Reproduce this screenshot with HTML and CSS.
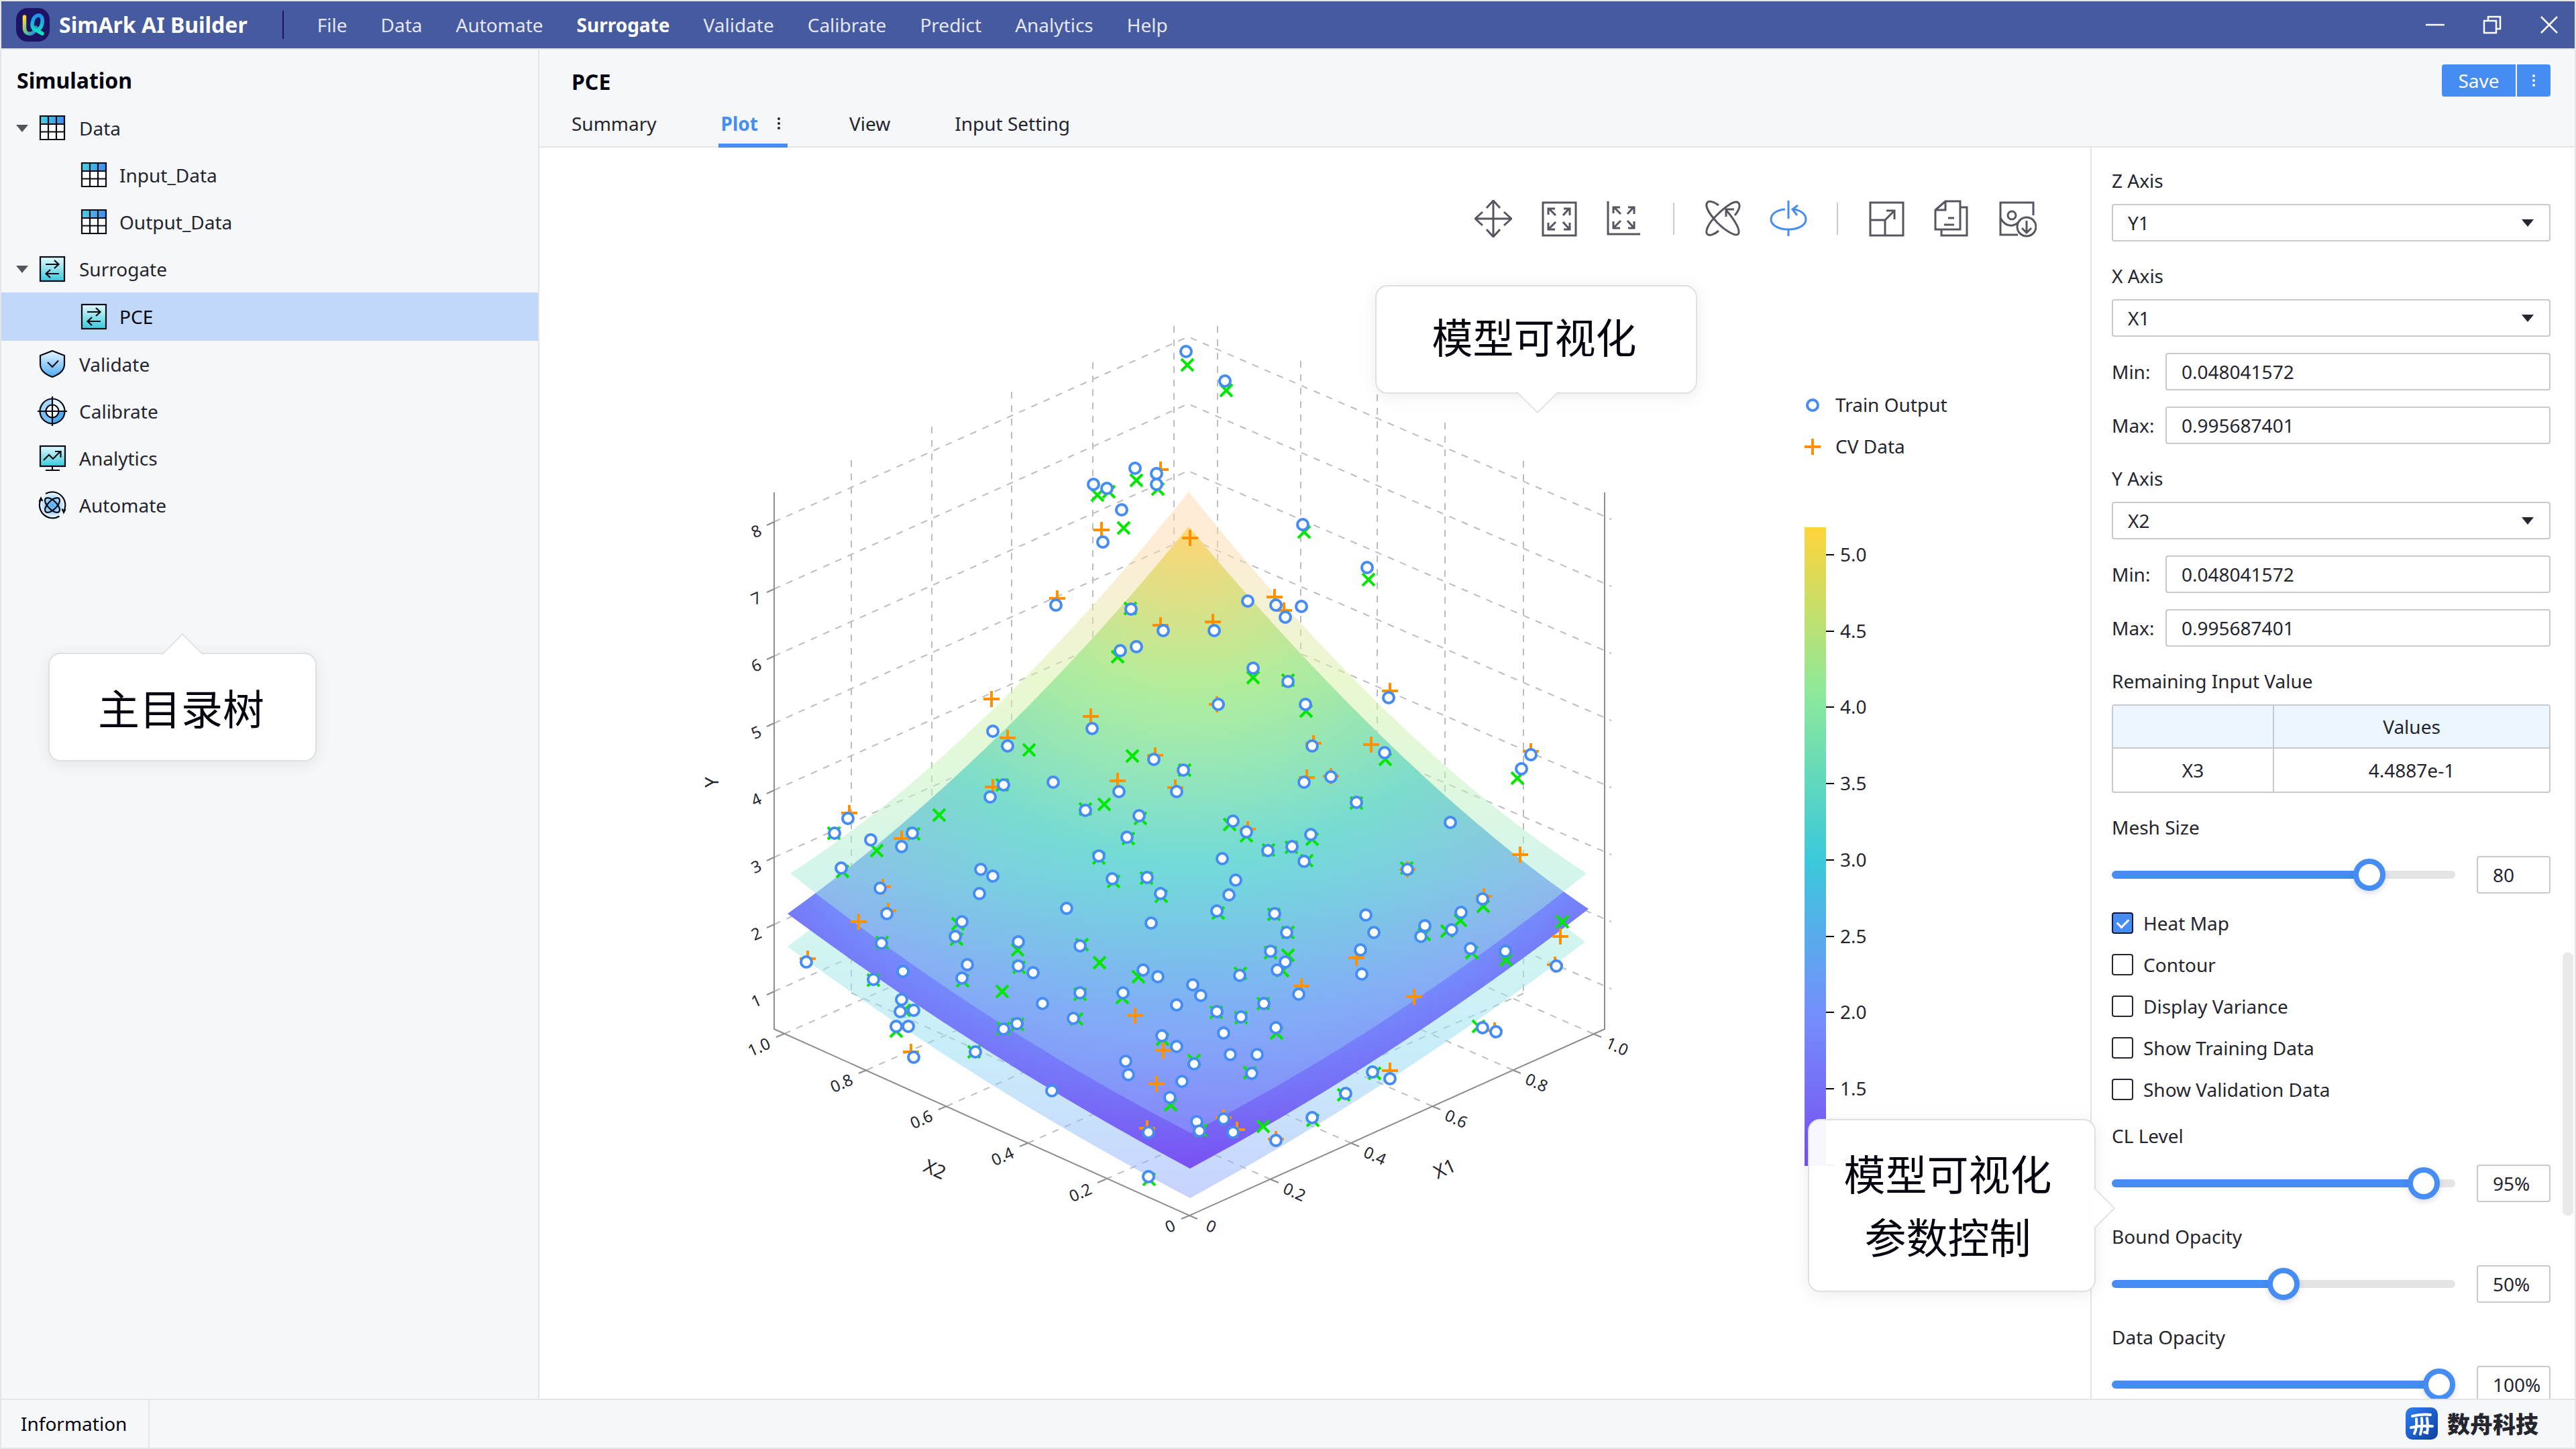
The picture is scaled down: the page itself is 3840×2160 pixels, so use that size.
FILE: index.html
```html
<!DOCTYPE html>
<html lang="en">
<head>
<meta charset="utf-8">
<title>SimArk AI Builder</title>
<link rel="stylesheet" href="styles.css">
</head>
<body>
<svg class="defs" aria-hidden="true">
  <defs>
    <linearGradient id="gHead" x1="0" x2="1"><stop offset="0" stop-color="#4ad0df"/><stop offset="1" stop-color="#3f8cf3"/></linearGradient>
    <linearGradient id="gTeal" x1="0" y1="0" x2="0" y2="1"><stop offset="0" stop-color="#e3fafc"/><stop offset="1" stop-color="#3bc9db"/></linearGradient>
    <linearGradient id="gSky" x1="0" y1="0" x2="0" y2="1"><stop offset="0" stop-color="#e7f5ff"/><stop offset="1" stop-color="#4dabf7"/></linearGradient>
    <radialGradient id="gGlow"><stop offset="0" stop-color="#4dabf7"/><stop offset=".35" stop-color="#7cc2fa"/><stop offset="1" stop-color="#eaf5fd"/></radialGradient>
    <symbol id="i-table" viewBox="0 0 40 40">
      <rect x="2" y="2" width="36" height="35" fill="#fff"/><rect x="2" y="2" width="36" height="12" fill="url(#gHead)"/>
      <path d="M2 2h36v35H2zM2 14h36M2 25.500h36M14 2v35M26 2v35" fill="none" stroke="#0a0a14" stroke-width="2.200"/>
    </symbol>
    <symbol id="i-swap" viewBox="0 0 40 40">
      <rect x="2" y="2" width="36" height="36" fill="url(#gTeal)" stroke="#0a0a14" stroke-width="2.200"/>
      <path d="M10 13h19M23 7l6.500 6-6.500 6M30 27H11M17 21l-6.500 6 6.500 6" fill="none" stroke="#0a0a14" stroke-width="2.200"/>
    </symbol>
    <symbol id="i-shield" viewBox="0 0 44 44">
      <path d="M22 2 40 9v13c0 9-7 15-18 19C11 37 4 31 4 22V9z" fill="url(#gSky)" stroke="#0a0a14" stroke-width="2.200"/>
      <path d="M15 19l7 7 9-9.500" fill="none" stroke="#0a0a14" stroke-width="2.200"/>
    </symbol>
    <symbol id="i-target" viewBox="0 0 44 44">
      <circle cx="22" cy="22" r="18.500" fill="#a5d5fb"/><path d="M22 22V3.500A18.500 18.500 0 0 1 40.500 22z" fill="#e7f5ff"/><path d="M22 22h18.500A18.500 18.500 0 0 1 22 40.500z" fill="#4dabf7"/><path d="M22 22v18.500A18.500 18.500 0 0 1 3.500 22z" fill="#74bef9"/>
      <circle cx="22" cy="22" r="9.500" fill="#fffef8"/>
      <g fill="none" stroke="#0a0a14" stroke-width="2.200"><circle cx="22" cy="22" r="18.500"/><circle cx="22" cy="22" r="9.500"/><path d="M22 0v44M0 22h44"/></g>
    </symbol>
    <symbol id="i-chart" viewBox="0 0 44 44">
      <rect x="4" y="4" width="37" height="30" fill="url(#gTeal)" stroke="#0a0a14" stroke-width="2.200"/>
      <path d="M9 25l8-8 6 6 11-11M26 12h8.500v9M22 34v5M12 40h21" fill="none" stroke="#0a0a14" stroke-width="2.200"/>
    </symbol>
    <symbol id="i-atom" viewBox="0 0 44 44">
      <circle cx="22" cy="22" r="18" fill="url(#gGlow)"/>
      <g fill="none" stroke="#0a0a14" stroke-width="2.200">
        <ellipse cx="22" cy="22" rx="14" ry="6.500" transform="rotate(45 22 22)"/><ellipse cx="22" cy="22" rx="14" ry="6.500" transform="rotate(-45 22 22)"/>
        <path d="M12 5a19.500 19.500 0 0 1 27.500 25M32.500 38.500A19.500 19.500 0 0 1 5 13M2.500 17 5 11.500l2.500 4.500M36.500 27.500l2.500 5.500 2.500-5"/>
      </g>
    </symbol>
  </defs>
</svg>
<div class="window">
  <header class="titlebar">
    <div class="app">
      <svg class="app-logo" viewBox="0 0 50 50" aria-hidden="true">
        <defs>
          <linearGradient id="gU" x1="0" y1="0" x2="1" y2="1"><stop offset="0" stop-color="#ffd93b"/><stop offset=".5" stop-color="#5fc48d"/><stop offset="1" stop-color="#1e7fe0"/></linearGradient>
          <linearGradient id="gQ" x1="0" y1="0" x2="0" y2="1"><stop offset="0" stop-color="#1e90ee"/><stop offset=".6" stop-color="#12c8d8"/><stop offset="1" stop-color="#12e4b8"/></linearGradient>
        </defs>
        <rect width="50" height="50" rx="17" fill="#1d1464"/>
        <path d="M12.500 13v16c0 8 5 10 10 9 4-1 7-5 7-9" fill="none" stroke="url(#gU)" stroke-width="5.500" stroke-linecap="round"/>
        <path d="M31 33c-7 0-8-8-6-14 2-8 12-12 14-3 1 8-2 15-8 17M32 34l7 4" fill="none" stroke="url(#gQ)" stroke-width="5.500" stroke-linecap="round"/>
      </svg>
      <strong class="app-name">SimArk AI Builder</strong>
    </div>
    <nav class="menu" aria-label="Main menu">
      <a href="#">File</a><a href="#">Data</a><a href="#">Automate</a><a href="#" class="current">Surrogate</a><a href="#">Validate</a><a href="#">Calibrate</a><a href="#">Predict</a><a href="#">Analytics</a><a href="#">Help</a>
    </nav>
    <div class="window-controls">
      <button type="button" aria-label="Minimize"><svg viewBox="0 0 28 28"><path d="M0 14h28"/></svg></button>
      <button type="button" aria-label="Restore"><svg viewBox="0 0 28 28"><path d="M2 8h18v18H2zM8 8V2h18v18h-6"/></svg></button>
      <button type="button" aria-label="Close"><svg viewBox="0 0 28 28"><path d="M2 2l24 24M26 2 2 26"/></svg></button>
    </div>
  </header>

  <div class="workspace">
    <aside class="sidebar">
      <h2>Simulation</h2>
      <ul class="tree">
        <li><a href="#" class="row"><span class="caret"></span><svg><use href="#i-table"/></svg>Data</a></li>
        <li><a href="#" class="row child"><svg><use href="#i-table"/></svg>Input_Data</a></li>
        <li><a href="#" class="row child"><svg><use href="#i-table"/></svg>Output_Data</a></li>
        <li><a href="#" class="row"><span class="caret"></span><svg><use href="#i-swap"/></svg>Surrogate</a></li>
        <li><a href="#" class="row child selected"><svg><use href="#i-swap"/></svg>PCE</a></li>
        <li><a href="#" class="row leaf"><svg><use href="#i-shield"/></svg>Validate</a></li>
        <li><a href="#" class="row leaf"><svg><use href="#i-target"/></svg>Calibrate</a></li>
        <li><a href="#" class="row leaf"><svg><use href="#i-chart"/></svg>Analytics</a></li>
        <li><a href="#" class="row leaf"><svg><use href="#i-atom"/></svg>Automate</a></li>
      </ul>
      <div class="callout callout-tree">主目录树</div>
    </aside>

    <main class="main">
      <header class="doc-head">
        <div>
          <h1>PCE</h1>
          <nav class="tabs" aria-label="Views">
            <a href="#">Summary</a>
            <a href="#" class="active">Plot<svg class="dots" viewBox="0 0 6 20"><circle cx="3" cy="3" r="2"/><circle cx="3" cy="10" r="2"/><circle cx="3" cy="17" r="2"/></svg></a>
            <a href="#">View</a>
            <a href="#">Input Setting</a>
          </nav>
        </div>
        <div class="save">
          <button type="button">Save</button>
          <button type="button" class="more" aria-label="More save options"><svg class="dots" viewBox="0 0 6 20"><circle cx="3" cy="3" r="2"/><circle cx="3" cy="10" r="2"/><circle cx="3" cy="17" r="2"/></svg></button>
        </div>
      </header>

      <div class="content">
        <section class="plot">
          <div class="toolbar">
            <div class="group">
              <button type="button" aria-label="Pan"><svg viewBox="0 0 56 56"><path d="M28 2v52M2 28h52M18 12 28 1l10 11M18 44l10 11 10-11M12 18 1 28l11 10M44 18l11 10-11 10"/></svg></button>
              <button type="button" aria-label="Fit"><svg viewBox="0 0 56 56"><path d="M4 4h49v49H4zM13 13l10 10M12 22V13h10M43 13 34 23M35 13h9v10M13 43l10-10M12 34v10h10M43 43l-9-10M44 34v10H35"/></svg></button>
              <button type="button" aria-label="Fit to axes"><svg viewBox="0 0 56 56"><path d="M3 2v49h48M12 11l10 10M11 20V11h10M41 11l-9 10M33 11h9v10M12 41l10-10M11 32v10h10M41 41l-9-10M42 32v10H33"/></svg></button>
            </div>
            <span class="sep"></span>
            <div class="group">
              <button type="button" aria-label="Orbit"><svg viewBox="0 0 56 56"><path d="M46 23c7-8 9-16 5-19-5-4-19 6-31 18C7 34 1 47 5 51c3 3 10 1 17-5M22 8C14 2 7 1 5 4c-4 5 3 17 15 30 12 12 27 21 31 17 4-5-4-20-18-36M33 25V14h12"/></svg></button>
              <button type="button" class="on" aria-label="Rotate around axis"><svg viewBox="0 0 56 56"><path d="M28 1v27M28 44v10M23 14C10 15 2 21 2 29c0 9 12 15 26 15s26-6 26-15c0-8-8-14-19-15M42 8l-8 6 7 9"/></svg></button>
            </div>
            <span class="sep"></span>
            <div class="group">
              <button type="button" aria-label="Resize"><svg viewBox="0 0 56 56"><path d="M4 4h49v49H4zM4 30h22v23M26 30l14-14M28 16h12v13"/></svg></button>
              <button type="button" aria-label="Copy"><svg viewBox="0 0 56 56"><path d="M18 2h22v42H3V15zM18 2v13H3M40 11h10v42H12v-9M22 27h9M16 37h15"/></svg></button>
              <button type="button" aria-label="Save image"><svg viewBox="0 0 56 56"><path d="M28 52H2V4h49v19M2 27c5 9 11 12 18 11 4-1 6-2 8-4"/><circle cx="19" cy="23" r="6"/><circle cx="41" cy="40" r="14"/><path d="M41 31v17M34 42l7 7 7-7"/></svg></button>
            </div>
          </div>
          <svg class="chart" viewBox="804 380 2312 1705" preserveAspectRatio="xMidYMin meet" role="img" aria-label="PCE response surface">
            <defs>
              <radialGradient id="gSurface" gradientUnits="userSpaceOnUse" cx="1772" cy="785" r="960">
                <stop offset="0" stop-color="#ffd43b"/><stop offset=".27" stop-color="#8ce99a"/><stop offset=".52" stop-color="#3bc9db"/><stop offset=".79" stop-color="#748ffc"/><stop offset="1" stop-color="#7950f2"/>
              </radialGradient>
              <linearGradient id="gUpper" gradientUnits="userSpaceOnUse" x1="0" y1="733" x2="0" y2="1689">
                <stop offset="0" stop-color="#ffd7ad"/><stop offset=".08" stop-color="#fdd9ac"/><stop offset=".3" stop-color="#d3f1a0"/><stop offset=".44" stop-color="#c1f1b9"/><stop offset=".6" stop-color="#a7ebd9"/><stop offset=".8" stop-color="#93c8f2"/><stop offset="1" stop-color="#92acfe"/>
              </linearGradient>
              <linearGradient id="gLower" gradientUnits="userSpaceOnUse" x1="0" y1="1386" x2="0" y2="1786">
                <stop offset="0" stop-color="#a6ece0"/><stop offset=".45" stop-color="#92dbf3"/><stop offset="1" stop-color="#91a5ff"/>
              </linearGradient>
              <linearGradient id="gBar" x1="0" y1="0" x2="0" y2="1">
                <stop offset="0" stop-color="#ffd43b"/><stop offset=".26" stop-color="#8ce99a"/><stop offset=".52" stop-color="#3bc9db"/><stop offset=".76" stop-color="#748ffc"/><stop offset="1" stop-color="#7950f2"/>
              </linearGradient>
              <g id="m-train"><circle r="8" fill="#fff" stroke="#458cf3" stroke-width="4"/></g>
              <path id="m-cv" d="M-12 0h24M0-12v24" stroke="#ff9100" stroke-width="4"/>
              <path id="m-val" d="M-9-9 9 9M9-9-9 9" stroke="#00e800" stroke-width="4"/>
            </defs>
            <g id="grid" class="grid"></g>
            <path d="M1174 1411 1772 960 2363 1404Q2076 1622 1774 1786 1458 1620 1174 1411Z" fill="url(#gLower)" opacity=".5"/>
            <path d="M1772 785Q1480 1143 1174 1362 1462 1575 1774 1742 2083 1576 2368 1355 2093 1168 1772 785Z" fill="url(#gSurface)"/>
            <path d="M1772 733Q1464 1118 1178 1302 1463 1528 1775 1689 2083 1530 2365 1302 2080 1118 1772 733Z" fill="url(#gUpper)" opacity=".5"/>
            <path class="axis" d="M1154 734V1534L1773 1812 2392 1534V734"/>
            <g id="axis" class="axis"></g>
            <g id="labels" class="labels"></g>
            <g class="titles">
              <text transform="translate(1060 1166) rotate(-90)">Y</text>
              <text transform="translate(1394 1742) rotate(24)">X2</text>
              <text transform="translate(2153 1741) rotate(-24)">X1</text>
            </g>
            <g id="points"></g>
            <g class="legend">
              <use href="#m-train" x="2702" y="604"/><text x="2736" y="614">Train Output</text>
              <use href="#m-cv" x="2702" y="666"/><text x="2736" y="676">CV Data</text>
            </g>
            <rect x="2690" y="786" width="32" height="952" fill="url(#gBar)"/>
            <g id="scale" class="scale"></g>
          </svg>
          <div class="callout callout-plot">模型可视化</div>
        </section>

        <form class="panel">
          <div class="field">
            <label for="z">Z Axis</label>
            <span class="select"><select id="z"><option>Y1</option></select></span>
          </div>
          <div class="field">
            <label for="x">X Axis</label>
            <span class="select"><select id="x"><option>X1</option></select></span>
            <div class="pair"><label for="xmin">Min:</label><input id="xmin" type="text" value="0.048041572"></div>
            <div class="pair"><label for="xmax">Max:</label><input id="xmax" type="text" value="0.995687401"></div>
          </div>
          <div class="field">
            <label for="y">Y Axis</label>
            <span class="select"><select id="y"><option>X2</option></select></span>
            <div class="pair"><label for="ymin">Min:</label><input id="ymin" type="text" value="0.048041572"></div>
            <div class="pair"><label for="ymax">Max:</label><input id="ymax" type="text" value="0.995687401"></div>
          </div>
          <div class="field">
            <span class="caption" id="remaining">Remaining Input Value</span>
            <table aria-labelledby="remaining">
              <thead><tr><th></th><th>Values</th></tr></thead>
              <tbody><tr><td>X3</td><td>4.4887e-1</td></tr></tbody>
            </table>
          </div>
          <div class="field">
            <label for="mesh">Mesh Size</label>
            <div class="slider"><input id="mesh" type="range" min="0" max="103" value="80" style="--fill:76%"><input type="text" value="80" aria-label="Mesh Size value"></div>
          </div>
          <div class="checks">
            <label><input type="checkbox" checked>Heat Map</label>
            <label><input type="checkbox">Contour</label>
            <label><input type="checkbox">Display Variance</label>
            <label><input type="checkbox">Show Training Data</label>
            <label><input type="checkbox">Show Validation Data</label>
          </div>
          <div class="field">
            <label for="cl">CL Level</label>
            <div class="slider"><input id="cl" type="range" value="95" style="--fill:95%"><input type="text" value="95%" aria-label="CL Level value"></div>
          </div>
          <div class="field">
            <label for="bo">Bound Opacity</label>
            <div class="slider"><input id="bo" type="range" value="50" style="--fill:50%"><input type="text" value="50%" aria-label="Bound Opacity value"></div>
          </div>
          <div class="field">
            <label for="do">Data Opacity</label>
            <div class="slider"><input id="do" type="range" value="100" style="--fill:100%"><input type="text" value="100%" aria-label="Data Opacity value"></div>
          </div>
          <span class="scroll-thumb"></span>
        </form>
        <div class="callout callout-panel">模型可视化<br>参数控制</div>
      </div>
    </main>
  </div>

  <footer class="statusbar">
    <span class="info">Information</span>
    <span class="brand">
      <svg viewBox="0 0 48 48" aria-hidden="true">
        <defs><linearGradient id="gBrand" x1="0" y1="0" x2="1" y2="1"><stop offset="0" stop-color="#2b80f5"/><stop offset="1" stop-color="#0f3f9c"/></linearGradient></defs>
        <rect width="48" height="48" rx="10" fill="url(#gBrand)"/>
        <path d="M10 13c9-2 19-3 27-2M8 30c10-2 22-3 32-2M16 17c1 9 0 16-3 22M24 16c1 9 0 17-2 24M32 16c1 8 1 17 0 22l-4-1" fill="none" stroke="#fff" stroke-width="4" stroke-linecap="round"/>
      </svg>
      <span>数舟科技</span>
    </span>
  </footer>
</div>
<script src="plot.js"></script>
</body>
</html>
```

FILE: styles.css
```css
* { box-sizing: border-box; }

body {
  margin: 0;
  font: 28px/40px "Noto Sans", "Noto Sans CJK SC", sans-serif;
  color: #24252f;
  background: #fff;
}

a { color: inherit; text-decoration: none; }
h1, h2 { margin: 0; font-size: 32px; line-height: 40px; font-weight: 700; color: #05050f; }
button, input, select { font: inherit; color: inherit; margin: 0; }
button { border: 0; padding: 0; background: none; cursor: pointer; }
svg { display: block; }
.defs { position: absolute; width: 0; height: 0; }

.window {
  display: flex;
  flex-direction: column;
  height: 100vh;
  border: 2px solid #e4e5e7;
  overflow: hidden;
}

/* Title bar */
.titlebar {
  display: flex;
  align-items: center;
  flex: none;
  height: 72px;
  padding: 0 24px 0 22px;
  border-bottom: 2px solid #e4e5e7;
  background: #465a9f;
  color: #fff;
}
.app { display: flex; align-items: center; gap: 14px; padding-right: 52px; border-right: 2px solid #1d1464; }
.app-logo { width: 50px; height: 50px; margin: -4px 0; }
.app-name { font-size: 32px; }
.menu { display: flex; gap: 50px; padding-left: 50px; color: #e3e6f1; }
.menu .current { color: #fff; font-weight: 700; }
.window-controls { display: flex; gap: 57px; margin-left: auto; }
.window-controls svg { width: 28px; height: 28px; fill: none; stroke: #fff; stroke-width: 2.5; }

/* Navigation tree */
.workspace { display: flex; flex: 1; min-height: 0; }
.sidebar {
  position: relative;
  flex: none;
  width: 802px;
  padding-top: 26px;
  border-right: 2px solid #e4e5e7;
  background: #f5f7f9;
}
.sidebar h2 { padding-left: 23px; }
.tree { list-style: none; margin: 16px 0 0; padding: 0; }
.row { display: flex; align-items: center; height: 70px; padding-left: 22px; }
.row svg { width: 40px; height: 40px; margin-right: 20px; }
.row.child { padding-left: 118px; }
.row.child svg { margin-right: 18px; }
.row.leaf { padding-left: 54px; }
.row.leaf svg { width: 44px; height: 44px; margin-right: 18px; }
.row.selected { height: 72px; background: #c1d8f8; color: #05050f; }
.caret { border: 9px solid transparent; border-top: 11px solid #53545d; border-bottom: 0; margin-right: 16px; }

/* Document header */
.main { display: flex; flex-direction: column; flex: 1; min-width: 0; }
.doc-head {
  display: flex;
  justify-content: space-between;
  align-items: flex-start;
  flex: none;
  padding: 28px 36px 0 44px;
  border-bottom: 2px solid #e4e5e7;
  background: #f5f7f9;
}
.doc-head h1 { padding-left: 4px; }
.tabs { display: flex; gap: 88px; margin: 16px 0 -2px; }
.tabs a { display: flex; align-items: center; gap: 28px; height: 62px; padding: 0 4px 4px; border-bottom: 6px solid transparent; }
.tabs .active { color: #458cf3; font-weight: 700; border-color: #458cf3; padding-right: 10px; }
.dots { width: 6px; height: 20px; fill: #24252f; }
.save { display: flex; gap: 2px; margin-top: -6px; }
.save button { height: 48px; width: 110px; background: #458cf3; color: #fff; border-radius: 4px 0 0 4px; }
.save .more { width: 50px; display: grid; place-items: center; border-radius: 0 4px 4px 0; }
.save .dots { fill: #fff; }

/* Plot */
.content { position: relative; display: flex; flex: 1; min-height: 0; }
.plot { position: relative; display: flex; flex-direction: column; flex: 1; min-width: 0; }
.toolbar { display: flex; justify-content: flex-end; align-items: center; gap: 44px; flex: none; height: 160px; padding: 52px 80px 0 0; }
.group { display: flex; gap: 42px; }
.group svg { width: 56px; height: 56px; fill: none; stroke: #55565f; stroke-width: 3; }
.group .on svg { stroke: #458cf3; }
.sep { width: 2px; height: 48px; background: #c8cacd; }
.chart { flex: 1; width: 100%; min-height: 0; }
.chart text { font-family: "Noto Sans", sans-serif; fill: #24252f; }
.grid { fill: none; stroke: #bdbdc0; stroke-width: 2; stroke-dasharray: 10 10; }
.axis { fill: none; stroke: #8c8d92; stroke-width: 2; }
.labels text { font-size: 24px; text-anchor: middle; dominant-baseline: central; }
.titles text { font-size: 28px; text-anchor: middle; dominant-baseline: central; }
.legend text, .scale text { font-size: 28px; }
.scale path { stroke: #05050f; stroke-width: 2; }

/* Parameter panel */
.panel {
  position: relative;
  flex: none;
  width: 722px;
  padding: 29px 36px 0 30px;
  border-left: 2px solid #e4e5e7;
  background: #fff;
  overflow: hidden;
}
.field { margin-bottom: 31px; }
.field > label, .caption { display: block; margin-bottom: 15px; }
.panel input[type="text"], .panel select {
  display: block;
  width: 100%;
  height: 56px;
  padding: 0 0 0 22px;
  border: 2px solid #c8c9cc;
  border-radius: 4px;
  background: #fff;
}
.panel select { appearance: none; }
.select { position: relative; display: block; }
.select::after {
  content: "";
  position: absolute;
  right: 25px;
  top: 23px;
  border: 9px solid transparent;
  border-top: 11px solid #24252f;
  border-bottom: 0;
}
.pair { display: grid; grid-template-columns: 80px 1fr; align-items: center; margin-top: 24px; }
.panel table { width: 100%; table-layout: fixed; border-spacing: 0; border: 2px solid #c8c9cc; border-radius: 4px; text-align: center; }
.panel th, .panel td { height: 64px; padding: 0; font-weight: 400; }
.panel th { background: #ebf6fe; border-bottom: 2px solid #c8c9cc; }
.panel th:first-child, .panel td:first-child { width: 240px; border-right: 2px solid #c8c9cc; }
.slider { display: flex; align-items: center; gap: 32px; padding-top: 8px; }
.panel .slider input[type="text"] { flex: none; width: 110px; }
.slider input[type="range"] { appearance: none; flex: 1; min-width: 0; height: 48px; background: none; }
.slider input[type="range"]::-webkit-slider-runnable-track {
  height: 12px;
  border-radius: 6px;
  background: linear-gradient(to right, #458cf3 var(--fill), #e4e4e5 var(--fill));
}
.slider input[type="range"]::-webkit-slider-thumb {
  appearance: none;
  width: 48px;
  height: 48px;
  margin-top: -18px;
  border: 8px solid #458cf3;
  border-radius: 50%;
  background: #fff;
  box-shadow: 0 3px 8px rgba(60, 60, 140, .2);
}
.checks { margin: -18px 0 18px; }
.checks label { display: flex; align-items: center; gap: 15px; height: 62px; }
.checks input {
  appearance: none;
  display: grid;
  place-items: center;
  width: 32px;
  height: 32px;
  border: 2px solid #24252f;
  border-radius: 4px;
  background: #fff;
}
.checks input:checked { background: #458cf3; border-color: #101838; }
.checks input:checked::after {
  content: "";
  width: 14px;
  height: 8px;
  border: solid #fff;
  border-width: 0 0 3px 3px;
  transform: translateY(-2px) rotate(-45deg);
}
.scroll-thumb { position: absolute; right: 2px; top: 1200px; width: 16px; height: 392px; border-radius: 7px; background: #e9e9ea; }

/* Callouts */
.callout {
  position: absolute;
  display: grid;
  place-items: center;
  border: 2px solid #dfe0e4;
  border-radius: 18px;
  background: rgba(255, 255, 255, .95);
  box-shadow: 0 4px 24px rgba(0, 0, 0, .08);
  font-size: 62px;
  line-height: 94px;
  text-align: center;
  color: #05050f;
  font-family: "Noto Sans CJK SC", sans-serif;
}
.callout::after {
  content: "";
  position: absolute;
  width: 42px;
  height: 42px;
  border: 2px solid #dfe0e4;
  background: #fff;
  transform: rotate(45deg);
}
.callout-tree { left: 70px; top: 899px; width: 400px; height: 162px; padding-right: 4px; }
.callout-tree::after { left: 175px; top: -22px; clip-path: polygon(0 0, 100% 0, 0 100%); }
.callout-plot { left: 1246px; top: 205px; width: 480px; height: 162px; padding: 0 6px 10px 0; font-size: 61px; }
.callout-plot::after { left: 217px; bottom: -22px; clip-path: polygon(100% 0, 100% 100%, 0 100%); }
.callout-panel { right: 714px; top: 1448px; width: 429px; height: 258px; padding: 0 12px 5px 0; }
.callout-panel::after { right: -22px; top: 108px; clip-path: polygon(0 0, 100% 0, 100% 100%); }

/* Status bar */
.statusbar {
  display: flex;
  justify-content: space-between;
  flex: none;
  height: 73px;
  border-top: 2px solid #e4e5e7;
  background: #f5f7f9;
}
.info { display: flex; align-items: center; padding: 0 32px 2px 29px; border-right: 2px solid #e4e5e7; color: #05050f; }
.brand { display: flex; align-items: center; gap: 14px; padding-right: 54px; padding-bottom: 2px; font: 900 34px/40px "Noto Sans CJK SC", sans-serif; }
.brand svg { width: 48px; height: 48px; }
```

FILE: plot.js
```js
const NS = "http://www.w3.org/2000/svg";

function add(parent, tag, attrs, text) {
  const el = document.createElementNS(NS, tag);
  for (const key in attrs) el.setAttribute(key, attrs[key]);
  if (text) el.textContent = text;
  document.getElementById(parent).appendChild(el);
}
const line = (parent, x1, y1, x2, y2) => add(parent, "path", { d: `M${x1} ${y1}L${x2} ${y2}` });
const label = (x, y, angle, text) =>
  add("labels", "text", { transform: `translate(${x} ${y}) rotate(${angle})` }, text);

// Walls: one horizontal line per unit of Y, bent at the back corner.
for (let v = 1; v <= 8; v++) {
  const y = 1578 - v * 100;
  add("grid", "path", { d: `M1154 ${y}L1771 ${y - 276}L2402 ${y - 4}` });
  line("axis", 1154, y, 1143, y + 5);
  label(1127, y + 13, -24, String(v));
}
[[1269, 686, 1480], [1389, 636, 1400], [1508, 584, 1400], [1629, 540, 1400], [1750, 486, 1400],
 [1815, 486, 1400], [1939, 538, 1400], [2053, 588, 1400], [2154, 630, 1400], [2271, 687, 1480]]
  .forEach(([x, top, bottom]) => line("grid", x, top, x, bottom));

// Floor: lines that start at the ticks of the two bottom axes.
const leftTicks = [1773, 1648, 1532, 1411, 1292, 1169];
const rightTicks = [1773, 1894, 2014, 2135, 2255, 2375];
for (let i = 0; i <= 5; i++) {
  const text = i ? (i / 5).toFixed(1) : "0";
  const y = Math.round(1812 - 54.2 * i);
  const lx = leftTicks[i], rx = rightTicks[i];
  line("axis", lx, y, lx - 12, y + 5);
  line("axis", rx, y, rx + 12, y + 5);
  if (i) {
    line("grid", lx, y, lx + 200, y - 88);
    line("grid", rx, y, rx - 200, y - 88);
  }
  label(lx - (i ? 38 : 29), y + (i ? 19 : 15), -24, text);
  label(rx + (i ? 36 : 33), y + (i ? 18 : 15), 24, text);
}
line("grid", 1269, 1480, 1540, 1603);
line("grid", 2271, 1481, 1990, 1604);

// Colour scale ticks.
for (let i = 0; i <= 8; i++) {
  const y = Math.round(827 + i * 113.7);
  line("scale", 2722, y, 2734, y);
  add("scale", "text", { x: 2743, y: y + 10 }, (5 - i / 2).toFixed(1));
}

// Samples, kept in four tiles. Each tile has an origin and a size of one unit.
const tiles = [
  { at: [1100, 480], unit: [0.4464, 0.4464],
    val: "1501,144 1330,529 1402,557 1200,578 1238,567 1288,687 1311,957 1269,1118 973,1430 1318,1449 1493,1496",
    cv: "1411,492 1214,694 1510,721 1066,922 1411,1012 847,1258 900,1388 1178,1317 1393,1447",
    train: "1497,99 1326,489 1398,507 1398,543 1187,542 1232,555 1281,627 1218,735 1061,945 1312,959 1420,1031 1330,1084 1277,1097 851,1366 1183,1357 900,1416 1388,1460 1487,1496" },
  { at: [1750, 480], unit: [0.4464, 0.4464],
    val: "174,229 434,701 649,860 265,1188 381,1196 441,1300 705,1460",
    cv: "336,918 367,964 130,1002 721,1232 143,1277 465,1407 658,1411 1191,1433",
    train: "170,197 430,676 645,820 246,932 340,945 425,950 371,986 134,1031 264,1156 381,1200 148,1277 439,1277 717,1254 461,1415 703,1438 1191,1446 1160,1491" },
  { at: [1100, 1150], unit: [0.4464, 0.4592],
    val: "883,44 1223,106 673,142 1160,123 1343,153 320,200 463,256 588,203 1303,217 1205,280 350,325 1254,357 1364,346 1413,405 735,495 731,544 481,555 934,580 1150,562 1207,621 939,636 750,680 453,678 1337,666 1142,724 1284,733 883,715 1132,804 556,775 528,842 934,820 887,834 1419,868 788,911 1524,938 1445,1082 1545,1165 1374,1325",
    cv: "851,51 1268,30 1460,52 371,134 547,217 484,374 502,452 403,488 232,608 1326,793 1420,905 577,910 1398,1015 1366,1158",
    train: "887,44 1052,35 842,83 1272,65 1465,65 367,152 1160,126 1339,144 322,200 444,222 583,200 547,244 1299,213 1205,274 345,313 811,318 851,340 475,378 1250,348 1366,344 806,397 1411,397 497,462 1097,444 748,488 1380,492 726,536 479,558 936,553 1142,566 228,618 766,628 936,632 985,653 551,648 748,671 452,675 1352,645 1402,666 1518,692 1545,727 1142,719 1286,719 1017,753 1465,758 546,741 587,775 542,780 1120,801 528,828 569,828 932,819 887,836 1415,858 1465,893 792,911 587,928 1294,941 1303,985 1523,949 1482,1006 1048,1037 1442,1058 1532,1137 1541,1167 1371,1171 1371,1315" },
  { at: [1750, 1150], unit: [0.4464, 0.4592],
    val: "1147,22 610,103 186,172 241,209 461,219 316,254 392,246 443,290 777,314 147,460 334,464 381,523 1032,437 957,484 836,530 911,519 1297,488 323,588 381,597 994,588 1109,611 363,647 221,656 298,753 141,781 225,799 342,850 1018,828 253,977 669,980 567,1049 463,1132 298,1151",
    cv: "443,20 524,15 246,187 779,318 1155,270 1034,405 609,605 1290,536 1272,628 425,697 802,732 1070,840 721,971 166,1124 210,1163 340,1193",
    train: "434,35 524,18 609,100 923,165 197,161 242,196 457,204 314,257 394,244 161,283 434,292 779,318 206,353 184,400 143,453 336,461 640,466 376,523 667,523 1030,413 958,457 838,501 824,536 927,514 322,584 622,579 990,574 1106,584 372,618 345,645 219,662 627,658 1276,631 416,723 300,753 143,780 224,797 340,832 166,849 1030,832 1075,845 188,919 278,919 260,980 663,976 721,997 573,1046 461,1124 166,1127 197,1171 340,1197" }
];
for (const kind of ["val", "cv", "train"]) {
  for (const tile of tiles) {
    for (const pair of tile[kind].split(" ")) {
      const [x, y] = pair.split(",").map(Number);
      add("points", "use", {
        href: "#m-" + kind,
        x: Math.round(tile.at[0] + x * tile.unit[0]),
        y: Math.round(tile.at[1] + y * tile.unit[1])
      });
    }
  }
}
```
